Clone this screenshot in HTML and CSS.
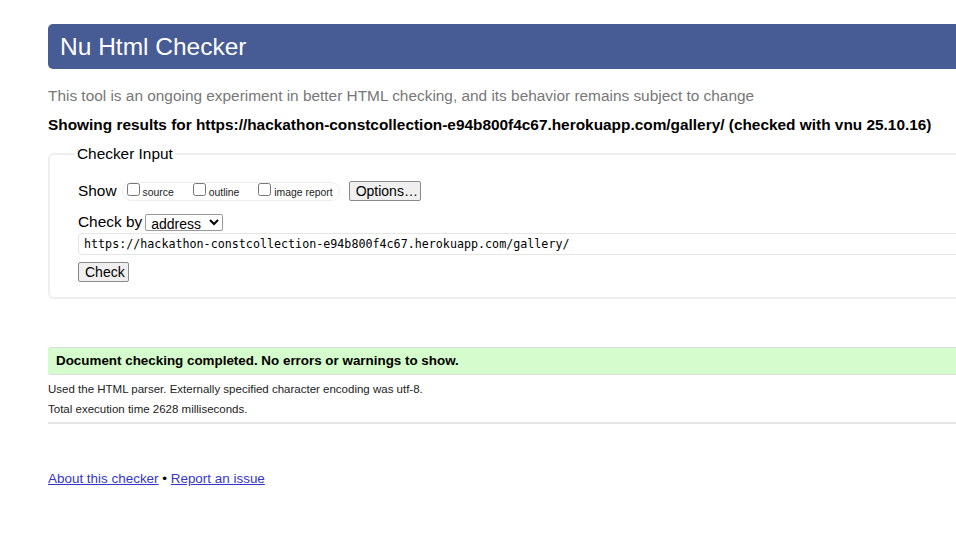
FILE: index.html
```html
<!DOCTYPE html>
<html lang="en">
<head>
<meta charset="utf-8">
<title>Showing results for https://hackathon-constcollection-e94b800f4c67.herokuapp.com/gallery/ - Nu Html Checker</title>
<link rel="stylesheet" href="styles.css">
</head>
<body>
<div class="page">
  <h1 class="title">Nu Html Checker</h1>
  <p class="intro">This tool is an ongoing experiment in better HTML checking, and its behavior remains subject to change</p>
  <p class="results-for">Showing results for https://hackathon-constcollection-e94b800f4c67.herokuapp.com/gallery/ (checked with vnu 25.10.16)</p>
  <form class="checker">
    <fieldset class="fs">
      <legend class="legend">Checker Input</legend>
      <div class="row show-row">
        <span class="lbl">Show</span>
        <span class="group">
          <label class="cb"><input type="checkbox"> source</label>
          <label class="cb"><input type="checkbox"> outline</label>
          <label class="cb"><input type="checkbox"> image report</label>
        </span>
        <button type="button" class="btn options">Options…</button>
      </div>
      <div class="row by-row">
        <span class="lbl">Check by</span>
        <select class="sel"><option>address</option></select>
      </div>
      <div class="url-row">
        <input class="url" type="text" value="https://hackathon-constcollection-e94b800f4c67.herokuapp.com/gallery/">
      </div>
      <div class="row">
        <button type="button" class="btn check">Check</button>
      </div>
    </fieldset>
  </form>
  <div class="success">Document checking completed. No errors or warnings to show.</div>
  <p class="details">Used the HTML parser. Externally specified character encoding was utf-8.</p>
  <p class="details">Total execution time 2628 milliseconds.</p>
  <hr class="rule">
  <p class="footer"><a href="#">About this checker</a> • <a href="#">Report an issue</a></p>
</div>
</body>
</html>
```
FILE: styles.css
```css
html { overflow: hidden; }
body {
  margin: 0;
  background: #fff;
  font-family: "Liberation Sans", Arial, sans-serif;
  color: #000;
}
.page {
  margin-left: 48px;
  width: 1100px;
  padding-top: 24px;
}
.title {
  margin: 0;
  height: 45px;
  line-height: 45px;
  background: #475b95;
  color: #fff;
  font-size: 24.5px;
  font-weight: normal;
  padding-left: 12px;
  border-radius: 5px 0 0 5px;
}
.intro {
  margin: 17px 0 0;
  font-size: 15.4px;
  line-height: 20px;
  color: #777;
}
.results-for {
  margin: 9px 0 0;
  font-size: 15.4px;
  line-height: 20px;
  font-weight: bold;
}
.checker { margin: 0; }
.fs {
  margin: 10px 0 0;
  border: 2px solid #eee;
  border-radius: 6px;
  padding: 8px 28px 15px 28px;
}
.legend {
  font-size: 15.4px;
  padding: 0 2px;
  margin-left: -3px;
}
.row {
  display: flex;
  align-items: center;
}
.lbl {
  font-size: 15.4px;
}
.show-row {
  margin-top: 10px;
  height: 20px;
}
.group {
  display: inline-flex;
  align-items: center;
  margin-left: 5px;
  border: 1px solid #eee;
  border-radius: 9px;
  height: 17px;
  padding: 0 6px 0 4px;
  gap: 19px;
}
.cb {
  font-size: 10.4px;
  display: inline-flex;
  align-items: center;
  color: #222;
  padding-top: 2px;
}
.cb input {
  margin: 0 3px 0 0;
  width: 13px;
  height: 13px;
  position: relative;
  top: -3px;
}
.btn {
  font-family: "Liberation Sans", Arial, sans-serif;
  font-size: 14px;
  color: #000;
  background: #efefef;
  border: 1px solid #8a8a8a;
  border-radius: 2px;
  padding: 1px 6px;
  height: 20px;
  line-height: 16px;
}
.options {
  margin-left: 9px;
  width: 72px;
}
.by-row {
  margin-top: 12px;
  height: 18px;
}
.sel {
  margin-left: 3px;
  width: 78px;
  height: 17px;
  font-family: "Liberation Sans", Arial, sans-serif;
  font-size: 14px;
  padding: 0 0 0 1px;
  border: 1px solid #999;
  border-radius: 2px;
  background: #fff;
}
.url-row { margin-top: 2px; }
.url {
  display: block;
  box-sizing: border-box;
  width: 100%;
  height: 22px;
  border: 1px solid #e6e6e6;
  border-radius: 4px;
  padding: 0 5px;
  font-family: "DejaVu Sans Mono", "Liberation Mono", monospace;
  font-size: 11.7px;
  color: #000;
}
.check {
  margin-top: 7px;
  width: 51px;
  height: 20px;
}
.success {
  margin-top: 48px;
  background: #d4fccc;
  border-top: 1px solid #ddd;
  border-bottom: 1px solid #ddd;
  border-radius: 3px 0 0 3px;
  height: 26px;
  line-height: 26px;
  padding-left: 8px;
  font-size: 13.4px;
  font-weight: bold;
}
.details {
  margin: 7px 0 0;
  font-size: 11.5px;
  line-height: 15px;
  color: #222;
}
.details + .details { margin-top: 5px; }
.rule {
  margin: 5px 0 0;
  border: 0;
  border-top: 2px solid #e5e5e5;
  height: 0;
}
.footer {
  margin: 47px 0 0;
  font-size: 13.45px;
}
.footer a { color: #3535cc; }
```
